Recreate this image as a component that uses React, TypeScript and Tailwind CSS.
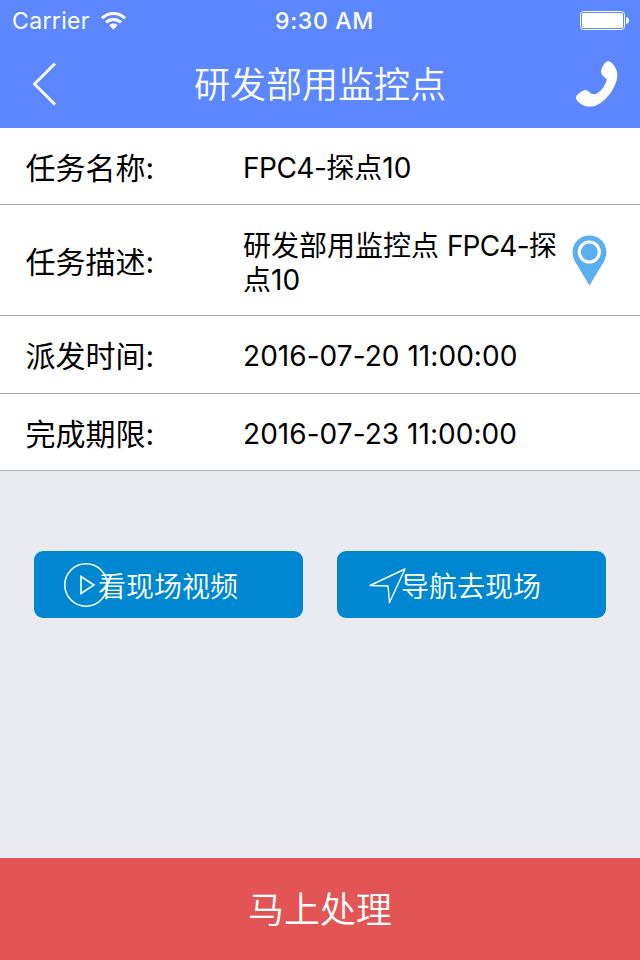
import type { ReactNode } from "react";

const font = "font-['Inter','Noto_Sans_CJK_SC',sans-serif]";
const thin = "font-['Inter','Noto_Sans_CJK_SC_DemiLight','Noto_Sans_CJK_SC',sans-serif] font-[350]";

function StatusBar() {
  return (
    <div className="flex h-10 items-center pl-3 pr-[11px] pt-px text-white">
      <div className="flex w-[263px] items-center gap-[11px]">
        <span className="text-[23px] font-normal leading-10 tracking-[0.35px]">Carrier</span>
        <svg className="-mt-px" width="25" height="19" viewBox="0 0 25 19" fill="none" stroke="#fff" strokeWidth="3">
          <path d="M1 7.2C7.5.8 17.5.8 24 7.2" />
          <path d="M5 11.4c4.300-4 10.700-4 15 0" />
          <path d="M8.300 14.200c2.400-2.300 6-2.300 8.400 0L12.500 18.400Z" fill="#fff" stroke="none" />
        </svg>
      </div>
      <span className="text-[23px] font-medium leading-10 tracking-[0.7px]">9:30 AM</span>
      <svg className="-mt-px ml-auto" width="49" height="19" viewBox="0 0 49 19" fill="#fff">
        <rect x=".5" y=".5" width="44" height="18" rx="3" fill="none" stroke="#fff" />
        <rect x="2" y="2" width="41" height="15" rx="1.500" />
        <path d="M46 6c4 .5 4 6.500 0 7Z" />
      </svg>
    </div>
  );
}

function Row({ label, height, children }: { label: string; height: string; children: ReactNode }) {
  return (
    <div className={`flex items-center border-b border-[#a9a9ab] bg-white pl-[25.5px] ${height}`}>
      <div className="w-[217.500px] shrink-0 pt-[3px] text-[30px] leading-9">{label}</div>
      {children}
    </div>
  );
}

export default function App() {
  return (
    <div className={`flex h-[960px] w-[640px] flex-col bg-[#eaebf0] text-black ${font}`}>
      <header className="h-32 bg-[#5c87ff] text-white">
        <StatusBar />
        <div className="flex h-[88px] items-center justify-between pl-8 pr-5">
          <svg width="45" height="44" viewBox="0 0 45 44" fill="none" stroke="#fff" strokeWidth="2.800">
            <path d="M23 1.500 2.500 22 23 42.500" />
          </svg>
          <h1 className={`pr-3 pt-[2px] text-[36px] leading-[44px] ${thin}`}>研发部用监控点</h1>
          <svg width="45" height="48" viewBox="0 0 45 48" fill="#fff">
            <path d="M30.500 2.500Q33 .2 35.500 2C38.500 4 41 8 42 12C43.300 17 41 24 37.500 30C33.500 36.500 27 43 22 45C17 47.500 10 47 6 44C3 42 .5 39 1 37.500C1.500 35 4 33 6.500 31.500C9 30 11 29.200 13 31C15 33 17 34.500 19.500 34.300C22 34 26 31 28.500 27C31 23 32 21 31.500 19.500C31 17.500 27.500 16.500 26.500 13.500C25.300 9.500 28 5 30.500 2.500Z" />
          </svg>
        </div>
      </header>

      <main className="flex flex-1 flex-col">
        <Row label="任务名称:" height="h-[77px]">
          <div className="pt-1 text-[28px] leading-[33px]">
            <span className="tracking-[-0.5px]">FPC4-</span>探点10
          </div>
        </Row>
        <Row label="任务描述:" height="h-[111px]">
          <div className="w-[316px] whitespace-nowrap pt-[5px] text-[28px] leading-[34px]">
            研发部用监控点 <span className="tracking-[-0.8px]">FPC4-</span>探
            <br />
            点10
          </div>
          <svg className="ml-[13px]" width="35" height="51" viewBox="0 0 35 51">
            <path d="M17.500.5C8 .5.600 7.700.600 17c0 5 2 9 4.500 13L17.500 50.500 29.900 30c2.500-4 4.500-8 4.500-13C34.400 7.700 27 .5 17.500.5Z" fill="#5aaff0" />
            <circle cx="17.300" cy="17" r="10" fill="none" stroke="#fff" strokeWidth="3.200" />
          </svg>
        </Row>
        <Row label="派发时间:" height="h-[78px]">
          <div className="pt-[2px] text-[28px] leading-[34px] tracking-[0.05px]">2016-07-20 11:00:00</div>
        </Row>
        <Row label="完成期限:" height="h-[77px]">
          <div className="pt-[3px] text-[28px] leading-[34px] tracking-[0.05px]">2016-07-23 11:00:00</div>
        </Row>

        <div className={`mt-20 flex justify-between px-[34px] text-[28px] text-white ${thin}`}>
          <button className="flex h-[67px] w-[269px] items-center rounded-[9px] bg-[#0087d1] pl-[29px]">
            <svg className="-mr-[11px] shrink-0" width="46" height="46" viewBox="0 0 46 46" fill="none" stroke="#fff" strokeWidth="1.600">
              <circle cx="23" cy="23" r="21.200" />
              <path d="M18 14.500v17L31 23Z" />
            </svg>
            <span className="pt-1">看现场视频</span>
          </button>
          <button className="flex h-[67px] w-[269px] items-center rounded-[9px] bg-[#0087d1] pl-8">
            <svg className="-mr-[5px] mt-[3px] shrink-0" width="37" height="36" viewBox="0 0 37 36" fill="none" stroke="#fff" strokeWidth="1.400" strokeLinejoin="round">
              <path d="M36 1 1 17.500l18 .5 1.500 16.500Z" />
            </svg>
            <span className="pt-1">导航去现场</span>
          </button>
        </div>
      </main>

      <button className={`h-[102px] bg-[#e35555] pt-[2px] text-[36px] text-white ${thin}`}>马上处理</button>
    </div>
  );
}
